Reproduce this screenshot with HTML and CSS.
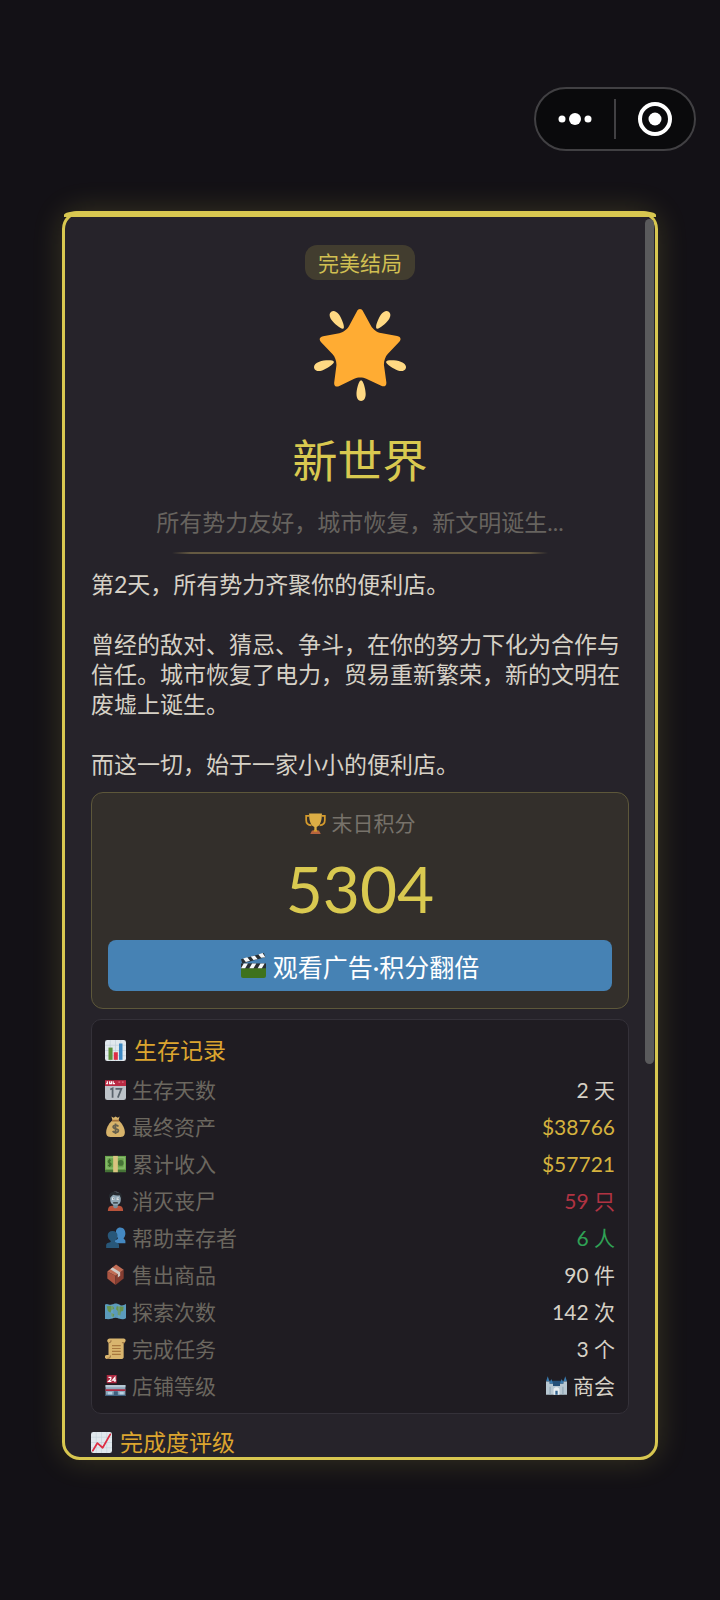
FILE: index.html
```
<!DOCTYPE html>
<html lang="zh-CN">
<head>
  <meta charset="UTF-8">
  <meta name="viewport" content="width=device-width, initial-scale=1.0">
  <title>新世界</title>
  <link rel="stylesheet" href="styles.css">
</head>
<body>
  <header class="topbar">
    <div class="capsule">
      <button class="capsule-btn" aria-label="更多">
        <svg width="36" height="36" viewBox="0 0 36 36" fill="#fff">
          <circle cx="5" cy="18" r="3.5"/>
          <circle cx="18" cy="18" r="6"/>
          <circle cx="31" cy="18" r="3.5"/>
        </svg>
      </button>
      <span class="capsule-line"></span>
      <button class="capsule-btn" aria-label="关闭">
        <svg width="36" height="36" viewBox="0 0 36 36">
          <circle cx="18" cy="18" r="15" fill="none" stroke="#fff" stroke-width="4"/>
          <circle cx="18" cy="18" r="6.5" fill="#fff"/>
        </svg>
      </button>
    </div>
  </header>

  <main class="card">
    <div class="card-scroll">
      <div class="ending">
        <span class="badge">完美结局</span>
        <svg class="ending-icon" viewBox="0 0 36 36">
          <path fill="#FFAC33" d="M28.84 17.638c-.987 1.044-1.633 3.067-1.438 4.493l.892 6.441c.197 1.427-.701 2.087-1.996 1.469l-5.851-2.796c-1.295-.62-3.408-.611-4.7.018l-5.826 2.842c-1.291.629-2.193-.026-2.007-1.452l.843-6.449c.186-1.427-.475-3.444-1.47-4.481l-4.494-4.688c-.996-1.037-.655-2.102.755-2.365l6.37-1.188c1.41-.263 3.116-1.518 3.793-2.789L16.762.956c.675-1.271 1.789-1.274 2.473-.009L22.33 6.66c.686 1.265 2.4 2.507 3.814 2.758l6.378 1.141c1.412.252 1.761 1.314.774 2.359l-4.456 4.72z"/>
          <path fill="#FFD983" d="M9.783 2.181c1.023 1.413 2.446 4.917 1.717 5.447-.728.531-3.607-1.91-4.63-3.323-1.022-1.413-.935-2.668-.131-3.254.804-.587 2.02-.282 3.044 1.13zm19.348 2.124C28.109 5.718 25.23 8.16 24.5 7.627c-.729-.53.695-4.033 1.719-5.445C27.242.768 28.457.463 29.262 1.051c.803.586.89 1.841-.131 3.254zM16.625 33.291c-.001-1.746.898-5.421 1.801-5.421.897 0 1.798 3.675 1.797 5.42 0 1.747-.804 2.712-1.8 2.71-.994.002-1.798-.962-1.798-2.709zm16.179-9.262c-1.655-.539-4.858-2.533-4.579-3.395.277-.858 4.037-.581 5.69-.041 1.655.54 2.321 1.605 2.013 2.556-.308.95-1.469 1.42-3.124.88zM2.083 20.594c1.655-.54 5.414-.817 5.694.044.276.857-2.928 2.854-4.581 3.392-1.654.54-2.818.07-3.123-.88-.308-.95.354-2.015 2.01-2.556z"/>
        </svg>
        <h1>新世界</h1>
        <p class="subtitle">所有势力友好，城市恢复，新文明诞生...</p>
        <hr class="divider">
      </div>

      <div class="story">
        <p>第2天，所有势力齐聚你的便利店。</p>
        <p>曾经的敌对、猜忌、争斗，在你的努力下化为合作与信任。城市恢复了电力，贸易重新繁荣，新的文明在废墟上诞生。</p>
        <p>而这一切，始于一家小小的便利店。</p>
      </div>

      <section class="score">
        <div class="score-label">
          <svg class="icon" viewBox="0 0 36 36">
            <path d="M7 5H2v7c0 6 4 9 9 9M29 5h5v7c0 6-4 9-9 9" fill="none" stroke="#d59a2c" stroke-width="3"/>
            <path d="M7 1h22c0 13-3 21-9 23v6h-4v-6C10 22 7 14 7 1z" fill="#dcae45"/>
            <path d="M12 30h12l3 6H9z" fill="#b8643e"/>
            <path d="M15 29h6v3h-6z" fill="#d59a2c"/>
          </svg>
          <span>末日积分</span>
        </div>
        <div class="score-num">5304</div>
        <button class="ad-btn">
          <svg class="icon icon-lg" viewBox="0 0 36 36">
            <path d="M0 17h36v16a3 3 0 0 1-3 3H3a3 3 0 0 1-3-3z" fill="#3e721d"/>
            <path d="M0 9 33 0l2 6L2 15z" fill="#292f33"/>
            <path d="M3 8l6-2 4 5-6 2zM14 5l6-1 4 5-6 1zM25 2l6-2 4 6-6 1z" fill="#f5f8fa"/>
            <path d="M0 15h36v7H0z" fill="#292f33"/>
            <path d="M4 15h6l-4 7H0zM16 15h6l-4 7h-6zM28 15h6l-4 7h-6z" fill="#f5f8fa"/>
          </svg>
          <span>观看广告·积分翻倍</span>
        </button>
      </section>

      <section class="stats">
        <h2>
          <svg class="icon" viewBox="0 0 36 36">
            <rect width="36" height="36" rx="4" fill="#e1e8ed"/>
            <path d="M0 9h36M0 18h36M0 27h36M9 0v36M18 0v36M27 0v36" stroke="#bccbd5"/>
            <path d="M6 13h7v21H6z" fill="#5c913b"/>
            <path d="M15 21h7v13h-7z" fill="#dd2e44"/>
            <path d="M24 6h6v28h-6z" fill="#3b88c3"/>
          </svg>
          <span>生存记录</span>
        </h2>
        <dl>
          <div class="row">
            <dt>
              <svg class="icon" viewBox="0 0 36 36">
                <path d="M0 10h36v22a4 4 0 0 1-4 4H4a4 4 0 0 1-4-4z" fill="#bdc3c9"/>
                <path d="M0 2h36v10H0z" fill="#b92a43"/>
                <path d="M4 4v4H2M8 4v4h3V4M14 4v4h3" fill="none" stroke="#fff" stroke-width="2"/>
                <path d="M23 4h3v3h-3zM29 4h3v3h-3z" fill="#d26174"/>
                <path d="M9 18l4-2v16M18 17h10l-6 15" fill="none" stroke="#59636b" stroke-width="3"/>
              </svg>
              <span>生存天数</span>
            </dt>
            <dd>2 天</dd>
          </div>
          <div class="row">
            <dt>
              <svg class="icon" viewBox="0 0 36 36">
                <path d="M12 8h12c6 5 10 13 10 20 0 6-3 8-7 8H9c-4 0-7-2-7-8C2 21 6 13 12 8z" fill="#d7b36b"/>
                <path d="M11 1l4 2 3-2 4 2 3-2-2 7H13z" fill="#d7b36b"/>
                <path d="M12 8h12" stroke="#a2713c" stroke-width="3"/>
                <path d="M23 18c-2-3-9-3-9 1s9 2 9 6-7 4-10 1M18 13v18" fill="none" stroke="#67604d" stroke-width="3"/>
              </svg>
              <span>最终资产</span>
            </dt>
            <dd class="gold">$38766</dd>
          </div>
          <div class="row">
            <dt>
              <svg class="icon" viewBox="0 0 36 36">
                <path d="M0 28h36v5H0z" fill="#467337"/>
                <rect y="5" width="36" height="24" fill="#6ba54d"/>
                <path d="M3 8h30v18H3z" fill="none" stroke="#8abd6f" stroke-width="2"/>
                <circle cx="27" cy="17" r="5" fill="#467337"/>
                <path d="M10 13c-5-2-6 3-2 4s3 6-3 4M8 10v14" fill="none" stroke="#3e6d2b" stroke-width="2"/>
                <path d="M14 5h8v28h-8z" fill="#d9c480"/>
              </svg>
              <span>累计收入</span>
            </dt>
            <dd class="gold">$57721</dd>
          </div>
          <div class="row">
            <dt>
              <svg class="icon" viewBox="0 0 36 36">
                <path d="M5 36c0-7 3-9 9-9h8c6 0 9 2 9 9z" fill="#b9533b"/>
                <path d="M14 23h8v6c-2 3-6 3-8 0z" fill="#788d9b"/>
                <path d="M9 12c0-12 18-12 18 0v5c0 12-18 12-18 0z" fill="#91a8b6"/>
                <path d="M7 15C5 1 17 2 21 4c7 0 9 5 7 11l-3-6c-5 1-8 0-11-1z" fill="#25292e"/>
                <path d="M12 15h4M20 15h4" stroke="#dfe7eb" stroke-width="4"/>
                <path d="M14 15h1M22 15h1M14 22h8" stroke="#292f33" stroke-width="2"/>
              </svg>
              <span>消灭丧尸</span>
            </dt>
            <dd class="red">59 只</dd>
          </div>
          <div class="row">
            <dt>
              <svg class="icon" viewBox="0 0 36 36">
                <path d="M16 28v-4c0-3 6-1 6-5-4-4-6-18 4-18s11 13 6 18c0 4 3 1 3 6v3z" fill="#4488c1"/>
                <path d="M2 36v-5c0-5 8-3 8-7-7-4-8-17 3-17s10 13 4 17c0 4 7 2 7 7v5z" fill="#285779"/>
              </svg>
              <span>帮助幸存者</span>
            </dt>
            <dd class="green">6 人</dd>
          </div>
          <div class="row">
            <dt>
              <svg class="icon" viewBox="0 0 36 36">
                <path d="M4 13 18 20v16L4 25z" fill="#ac5542"/>
                <path d="M18 20 32 10v15L18 36z" fill="#853d31"/>
                <path d="M4 13 19 1l13 9-14 10z" fill="#c06c55"/>
                <path d="M9 9l4-3 13 8v6l-4 3v-6z" fill="#cdc9c5"/>
              </svg>
              <span>售出商品</span>
            </dt>
            <dd>90 件</dd>
          </div>
          <div class="row">
            <dt>
              <svg class="icon" viewBox="0 0 36 36">
                <path d="M0 6c5-3 7 2 12 0s7-3 12 0 8 1 12-1v24c-4 3-7 3-12 1s-7-2-12 0-8 1-12 1z" fill="#5b9bbc"/>
                <path d="M3 9l10-1 3 5-5 3-2 4-4-3zM11 20l5 3-2 5-3-2zM20 9l12 1-1 7-4 1-1 7-4-1v-7l-3-3z" fill="#68934d"/>
                <path d="M12 6v24M24 6v24" stroke="#81b4cc"/>
              </svg>
              <span>探索次数</span>
            </dt>
            <dd>142 次</dd>
          </div>
          <div class="row">
            <dt>
              <svg class="icon" viewBox="0 0 36 36">
                <path d="M8 1h24c4 0 5 6 0 7v25c0 2-2 3-4 3H3c-5-1-4-7 0-7h3V8C2 6 4 1 8 1z" fill="#d9b56e"/>
                <path d="M7 8c2 0 4-2 3-4M29 8h5M4 35c4 0 6-2 5-5" fill="none" stroke="#a27a48" stroke-width="2"/>
                <path d="M12 13h15M12 18h15M12 23h15M12 28h15" stroke="#a9783f" stroke-width="2"/>
              </svg>
              <span>完成任务</span>
            </dt>
            <dd>3 个</dd>
          </div>
          <div class="row">
            <dt>
              <svg class="icon" viewBox="0 0 36 36">
                <path d="M1 17h34v19H1z" fill="#8da7bb"/>
                <path d="M3 0h17v14H3z" fill="#ad2941"/>
                <path d="M6 4h4v3L6 11h5M17 12V4l-4 5h6" fill="none" stroke="#fff" stroke-width="2"/>
                <path d="M1 19h34" stroke="#b8c8d4" stroke-width="4"/>
                <path d="M1 26h34" stroke="#ad2941" stroke-width="3"/>
                <path d="M5 29h7v5H5zM25 29h7v5h-7z" fill="#b7d1e3"/>
                <path d="M15 28h7v8h-7z" fill="#3e6180"/>
                <path d="M1 35h34" stroke="#3e6180" stroke-width="2"/>
              </svg>
              <span>店铺等级</span>
            </dt>
            <dd>
              <svg class="icon" viewBox="0 0 36 36">
                <path d="M5 10h26v10H5z" fill="#255079"/>
                <path d="M0 11l3-9 3 9zM30 11l3-9 3 9zM6 14l3-7 3 7zM24 14l3-7 3 7z" fill="#397bb0"/>
                <path d="M0 11h6v4h6v4h12v-4h6v-4h6v23H0z" fill="#b7c7d2"/>
                <path d="M7 20v14M29 20v14" stroke="#8fa5b5" stroke-width="2"/>
                <path d="M13 34V24c2-4 8-4 10 0v10z" fill="#e7edf1"/>
                <path d="M16 34v-7h4v7z" fill="#316290"/>
              </svg>
              <span>商会</span>
            </dd>
          </div>
        </dl>
      </section>

      <section class="rating">
        <h2>
          <svg class="icon" viewBox="0 0 36 36">
            <rect width="36" height="36" rx="4" fill="#e1e8ed"/>
            <path d="M0 9h36M0 18h36M0 27h36M9 0v36M18 0v36M27 0v36" stroke="#c5d1da"/>
            <path d="M3 32l8-13 9 8L33 4" fill="none" stroke="#dd2e44" stroke-width="3" stroke-linejoin="round" stroke-linecap="round"/>
          </svg>
          <span>完成度评级</span>
        </h2>
      </section>
    </div>
    <div class="scrollbar"></div>
  </main>
</body>
</html>
```

FILE: styles.css
```
* {
  box-sizing: border-box;
  margin: 0;
  padding: 0;
}
body {
  display: flex;
  flex-direction: column;
  height: 100vh;
  background-color: #131116;
  color: #d6d1c6;
  font-family: Lato, "Noto Sans CJK SC", sans-serif;
  font-size: 21px;
  line-height: 30px;
}
button {
  border: none;
  font-family: inherit;
  cursor: pointer;
}
.topbar {
  display: flex;
  justify-content: flex-end;
  padding: 87px 24px 60px;
}
.capsule {
  display: flex;
  align-items: center;
  width: 162px;
  height: 64px;
  border: 2px solid #414043;
  border-radius: 32px;
  background-color: #0a0a0c;
}
.capsule-btn {
  display: flex;
  flex: 1;
  justify-content: center;
  background: none;
}
.capsule-line {
  width: 2px;
  height: 40px;
  background-color: #414043;
}
.card {
  position: relative;
  flex: 1;
  min-height: 0;
  margin: 0 62px 140px;
  border: 3px solid #d8c750;
  border-radius: 18px;
  background-color: #26232a;
  box-shadow: 0 0 30px rgba(216, 199, 80, 0.2);
}
/* bright strip along the top edge */
.card::before {
  content: "";
  position: absolute;
  top: -3px;
  left: -1px;
  right: -1px;
  height: 6px;
  border-radius: 16px 16px 0 0 / 4px 4px 0 0;
  background-color: #d8c750;
}
.card-scroll {
  height: 100%;
  padding: 31px 26px 0;
  border-radius: 15px;
  overflow: hidden;
}
.scrollbar {
  position: absolute;
  top: 5px;
  right: 1px;
  width: 9px;
  height: 68%;
  border-radius: 5px;
  background-color: #5a5a5c;
}
.ending {
  display: flex;
  flex-direction: column;
  align-items: center;
}
.badge {
  padding: 0 13px;
  border-radius: 12px;
  background-color: #423d2f;
  color: #d0bf52;
  line-height: 35px;
}
.ending-icon {
  width: 92px;
  height: 92px;
  margin-top: 29px;
}
h1 {
  margin-top: 30px;
  color: #d9c950;
  font-size: 45px;
  font-weight: normal;
  line-height: 60px;
}
.subtitle {
  margin-top: 16px;
  color: #67635f;
  font-size: 23px;
}
.divider {
  width: 70%;
  height: 2px;
  margin: 15px 0;
  border: none;
  background: linear-gradient(to right, transparent, #655a42 5%, #655a42 95%, transparent);
}
.story {
  display: flex;
  flex-direction: column;
  gap: 30px;
  font-size: 23px;
}
.icon {
  flex-shrink: 0;
  width: 21px;
  height: 21px;
}
.icon-lg {
  width: 25px;
  height: 25px;
}
.score {
  margin-top: 13px;
  padding: 15px 16px 17px;
  border: 1px solid #5d573a;
  border-radius: 12px;
  background-color: #332f2b;
  text-align: center;
}
.score-label {
  display: flex;
  align-items: center;
  justify-content: center;
  gap: 6px;
  color: #77726a;
}
.score-num {
  margin: 16px 0;
  color: #d9c950;
  font-size: 64px;
  line-height: 70px;
}
.ad-btn {
  display: flex;
  align-items: center;
  justify-content: center;
  gap: 7px;
  width: 100%;
  height: 51px;
  border-radius: 8px;
  background-color: #4682b4;
  color: #fff;
  font-size: 25px;
}
.stats {
  margin-top: 10px;
  padding: 15px 13px 9px;
  border: 1px solid #343139;
  border-radius: 10px;
  background-color: #1f1c22;
}
h2 {
  display: flex;
  align-items: center;
  gap: 8px;
  color: #dca52f;
  font-size: 23px;
  font-weight: normal;
}
dl {
  margin-top: 6px;
}
.row {
  display: flex;
  align-items: center;
  justify-content: space-between;
  height: 37px;
}
dt,
dd {
  display: flex;
  align-items: center;
  gap: 6px;
}
dt {
  color: #6b675f;
}
.gold {
  color: #d5b23e;
}
.red {
  color: #b03342;
}
.green {
  color: #2fa155;
}
.rating {
  margin-top: 13px;
}
```
